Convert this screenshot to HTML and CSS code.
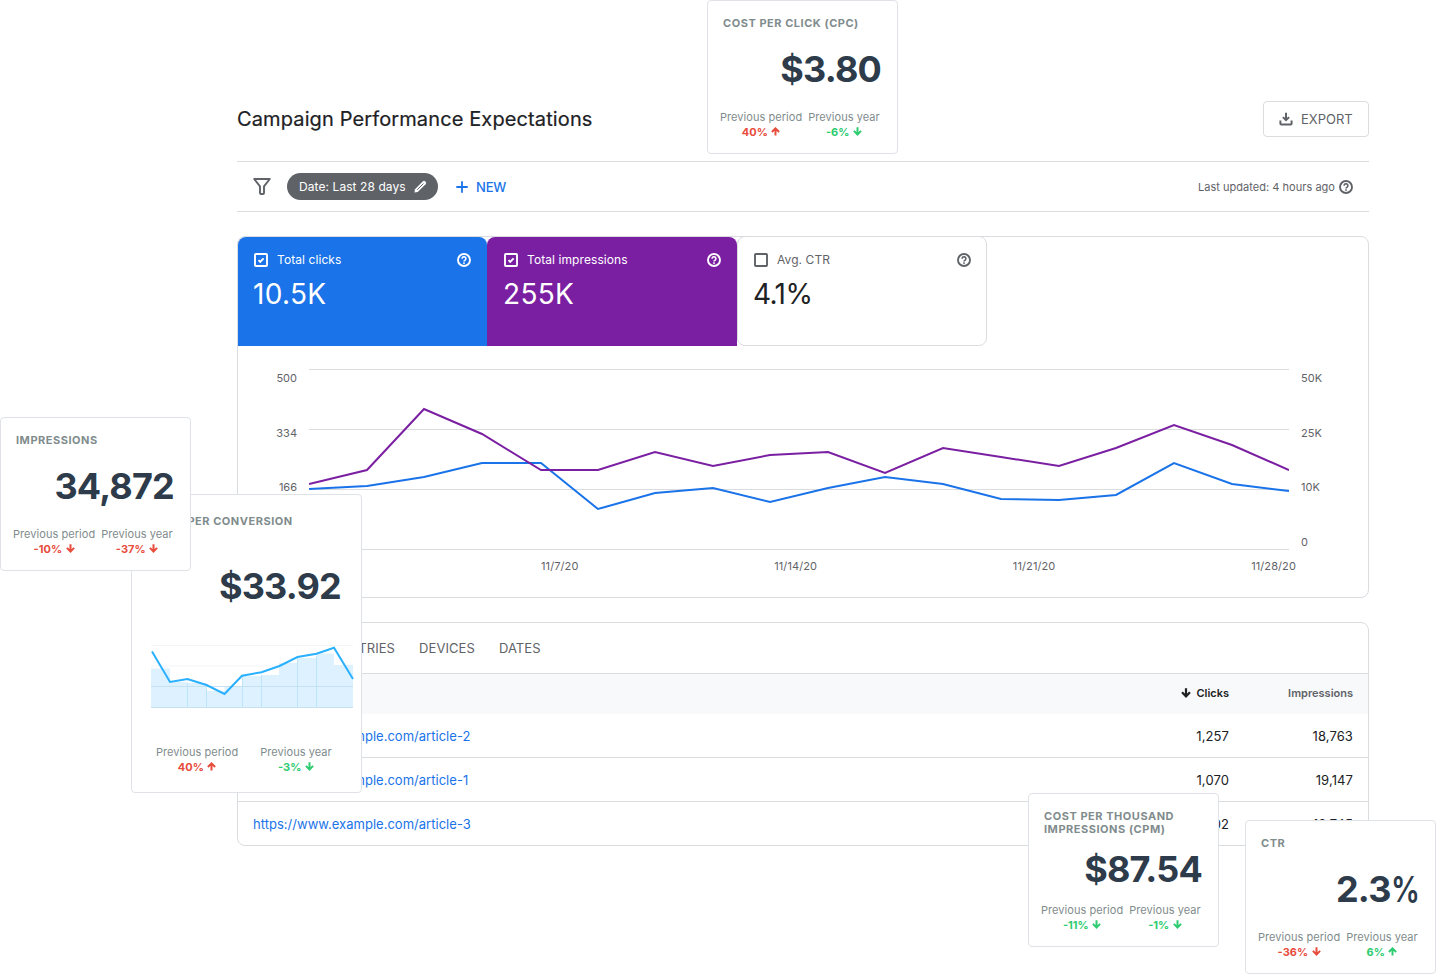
FILE: index.html
```
<!DOCTYPE html>
<html lang="en">
<head>
    <meta charset="UTF-8">
    <meta name="viewport" content="width=device-width, initial-scale=1.0">
    <title>Campaign Performance Expectations</title>
    <link rel="stylesheet" href="styles.css">
</head>
<body>

<!-- Shared icons -->
<svg class="sprite" width="0" height="0">
    <symbol id="icon-help" viewBox="0 0 14 14">
        <circle cx="7" cy="7" r="6" fill="none" stroke="currentColor" stroke-width="1.9"/>
        <path d="M5.1 5.7a1.9 1.9 0 1 1 2.9 1.6c-.7.4-1 .7-1 1.3" fill="none" stroke="currentColor" stroke-width="1.6"/>
        <rect x="6.2" y="9.3" width="1.6" height="1.6" fill="currentColor"/>
    </symbol>
    <symbol id="icon-up" viewBox="0 0 9 9">
        <path d="M4.5 8.6V1.4M.9 5l3.6-3.6L8.1 5" fill="none" stroke="currentColor" stroke-width="2"/>
    </symbol>
    <symbol id="icon-down" viewBox="0 0 9 9">
        <path d="M4.5.2v7.2M.9 3.9l3.6 3.6 3.6-3.6" fill="none" stroke="currentColor" stroke-width="2"/>
    </symbol>
</svg>

<div class="report">
    <div class="header">
        <h1>Campaign Performance Expectations</h1>
        <button class="export">
            <svg width="14" height="14" viewBox="0 0 14 14" fill="none" stroke="currentColor" stroke-width="2">
                <path d="M7 .8v7.4M3.9 5.1 7 8.2l3.1-3.1"/>
                <path d="M1.4 8.4v3.2q0 1 1 1h9.2q1 0 1-1V8.4"/>
            </svg>
            EXPORT
        </button>
    </div>

    <div class="filters">
        <svg class="filter-icon" width="18" height="17" viewBox="0 0 18 17" fill="none" stroke="currentColor" stroke-width="1.9" stroke-linejoin="round">
            <path d="M1.2 1h15.6L11 8.4V15q0 1-1 1H8q-1 0-1-1V8.4z"/>
        </svg>
        <div class="chip">
            Date: Last 28 days
            <svg width="13" height="13" viewBox="0 0 13 13">
                <path d="M.5 12.5 1 9.3 8.7 1.4q1.3-1.2 2.6 0l.3.3q1.2 1.3 0 2.6L3.7 12z" fill="#fff"/>
                <path d="M3.2 9.8 9.4 3.6" stroke="#5f6368" stroke-width="1"/>
            </svg>
        </div>
        <div class="new">
            <svg width="12" height="12" viewBox="0 0 12 12"><path d="M6 .3v11.4M.3 6h11.4" stroke="currentColor" stroke-width="1.8"/></svg>
            NEW
        </div>
        <div class="updated">
            Last updated: 4 hours ago
            <svg class="help"><use href="#icon-help"/></svg>
        </div>
    </div>

    <div class="card chart-card">
        <div class="tiles">
            <div class="tile blue">
                <div class="tile-label">
                    <svg class="check" viewBox="0 0 14 14"><rect x="1" y="1" width="12" height="12" rx=".8"/><path d="M4.5 7.1 6.2 8.8 9.6 5.3"/></svg>
                    Total clicks
                    <svg class="help"><use href="#icon-help"/></svg>
                </div>
                <div class="tile-value">10.5K</div>
            </div>
            <div class="tile purple">
                <div class="tile-label">
                    <svg class="check" viewBox="0 0 14 14"><rect x="1" y="1" width="12" height="12" rx=".8"/><path d="M4.5 7.1 6.2 8.8 9.6 5.3"/></svg>
                    Total impressions
                    <svg class="help"><use href="#icon-help"/></svg>
                </div>
                <div class="tile-value">255K</div>
            </div>
            <div class="tile plain">
                <div class="tile-label">
                    <svg class="check" viewBox="0 0 14 14"><rect x="1" y="1" width="12" height="12" rx=".8"/></svg>
                    Avg. CTR
                    <svg class="help"><use href="#icon-help"/></svg>
                </div>
                <div class="tile-value">4.1%</div>
            </div>
        </div>

        <div class="chart">
            <div class="axis left"><span>500</span><span>334</span><span>166</span><span></span></div>
            <svg class="plot" width="980" height="181" viewBox="0 0 980 181" fill="none">
                <path d="M0 .5H980M0 60.5H980M0 120.5H980M0 180.5H980" stroke="#dadce0"/>
                <polyline stroke="#1a73e8" stroke-width="2" points="0,120 58,117 115,108 173,94 232,94 289,140 346,124 404,119 461,133 519,119 576,108 634,115 692,130 750,131 807,126 865,94 923,115 980,122"/>
                <polyline stroke="#7b1fa2" stroke-width="2" points="0,115 58,101 115,40 173,65 232,101 289,101 346,83 404,97 461,86 519,83 576,104 634,79 692,88 750,97 807,79 865,56 923,76 980,101"/>
            </svg>
            <div class="axis right"><span>50K</span><span>25K</span><span>10K</span><span>0</span></div>
        </div>
        <div class="dates"><span>11/7/20</span><span>11/14/20</span><span>11/21/20</span><span>11/28/20</span></div>
    </div>

    <div class="card table-card">
        <div class="tabs">
            <span>PAGES</span><span>COUNTRIES</span><span>DEVICES</span><span>DATES</span>
        </div>
        <div class="row head">
            <span>Page</span>
            <span class="sorted"><svg class="arrow sort"><use href="#icon-down"/></svg>Clicks</span>
            <span>Impressions</span>
        </div>
        <div class="row"><a>https://www.example.com/article-2</a><span>1,257</span><span>18,763</span></div>
        <div class="row"><a>https://www.example.com/article-1</a><span>1,070</span><span>19,147</span></div>
        <div class="row"><a>https://www.example.com/article-3</a><span>1,002</span><span>18,745</span></div>
    </div>
</div>

<!-- Floating metric cards -->
<div class="metric cpc">
    <div class="metric-title">COST PER CLICK (CPC)</div>
    <div class="metric-value">$3.80</div>
    <div class="compare">
        <div>Previous period<b class="red">40% <svg class="arrow"><use href="#icon-up"/></svg></b></div>
        <div>Previous year<b class="green">-6% <svg class="arrow"><use href="#icon-down"/></svg></b></div>
    </div>
</div>

<div class="metric conversion">
    <div class="metric-title">COST PER CONVERSION</div>
    <div class="metric-value">$33.92</div>
    <svg class="spark" width="203" height="65" viewBox="0 0 203 65" fill="none">
        <path d="M0 1.5H202M0 22H202" stroke="#f3f5f6"/>
        <path d="M0 64V24.5h19V38h17.5v1H55.500v8H73.500V42H91V32h19v-1h18V19h18V14h19V9.5h18V21h19V64z" fill="#def1fe"/>
        <path d="M36.5 39V64M55.5 40V64M91.5 32V64M110.5 31V64M146.5 15V64M165.5 12V64" stroke="#bce5fc"/>
        <path d="M0 42.5H202M0 63.5H202" stroke="#c6e2f2"/>
        <polyline points="1,7.5 19,38 36.5,35 55.5,41 73.5,50 91,31.7 110.5,28.3 128.5,22 146.5,13 165.5,9.7 183,3.8 202,35" stroke="#29b0ff" stroke-width="2"/>
    </svg>
    <div class="compare">
        <div>Previous period<b class="red">40% <svg class="arrow"><use href="#icon-up"/></svg></b></div>
        <div>Previous year<b class="green">-3% <svg class="arrow"><use href="#icon-down"/></svg></b></div>
    </div>
</div>

<div class="metric impressions">
    <div class="metric-title">IMPRESSIONS</div>
    <div class="metric-value">34,872</div>
    <div class="compare">
        <div>Previous period<b class="red">-10% <svg class="arrow"><use href="#icon-down"/></svg></b></div>
        <div>Previous year<b class="red">-37% <svg class="arrow"><use href="#icon-down"/></svg></b></div>
    </div>
</div>

<div class="metric cpm">
    <div class="metric-title">COST PER THOUSAND IMPRESSIONS (CPM)</div>
    <div class="metric-value">$87.54</div>
    <div class="compare">
        <div>Previous period<b class="green">-11% <svg class="arrow"><use href="#icon-down"/></svg></b></div>
        <div>Previous year<b class="green">-1% <svg class="arrow"><use href="#icon-down"/></svg></b></div>
    </div>
</div>

<div class="metric ctr">
    <div class="metric-title">CTR</div>
    <div class="metric-value">2.3<span class="percent">%</span></div>
    <div class="compare">
        <div>Previous period<b class="red">-36% <svg class="arrow"><use href="#icon-down"/></svg></b></div>
        <div>Previous year<b class="green">6% <svg class="arrow"><use href="#icon-up"/></svg></b></div>
    </div>
</div>

</body>
</html>
```
FILE: styles.css
```
* {
    box-sizing: border-box;
}
body {
    font-family: Inter, "Liberation Sans", sans-serif;
    font-size: 13px;
    color: #202124;
    background: #fff;
    margin: 0;
    position: relative;
    height: 974px;
    overflow: hidden;
}
.sprite {
    position: absolute;
}
svg {
    flex: none;
}
.report {
    width: 1132px;
    margin-left: 237px;
    padding-top: 101px;
}

/* Header */
.header {
    display: flex;
    justify-content: space-between;
    height: 60px;
}
h1 {
    font-size: 20px;
    font-weight: 400;
    letter-spacing: 0.12px;
    line-height: 36px;
    margin: 0;
    -webkit-text-stroke: 0.2px;
}
.export {
    display: flex;
    align-items: center;
    gap: 8px;
    width: 106px;
    height: 36px;
    padding: 0 0 0 15px;
    font: 400 13px Inter, sans-serif;
    color: #5f6368;
    background: #fff;
    border: 1px solid #dadce0;
    border-radius: 4px;
}

/* Filters */
.filters {
    display: flex;
    align-items: center;
    height: 51px;
    padding: 0 16px;
    border-top: 1px solid #dadce0;
    border-bottom: 1px solid #dadce0;
    color: #5f6368;
}
.chip {
    display: flex;
    align-items: center;
    justify-content: space-between;
    width: 151px;
    height: 27px;
    margin-left: 16px;
    padding: 0 11px 0 12px;
    border-radius: 14px;
    background: #5f6368;
    color: #fff;
    font-size: 12px;
    letter-spacing: 0.08px;
}
.new {
    display: flex;
    align-items: center;
    gap: 8px;
    margin-left: 18px;
    color: #1a73e8;
    font-weight: 500;
    letter-spacing: -0.2px;
}
.updated {
    display: flex;
    align-items: center;
    gap: 4px;
    margin-left: auto;
    font-size: 11px;
    letter-spacing: 0.03px;
}
.help {
    width: 14px;
    height: 14px;
}

/* Cards */
.card {
    border: 1px solid #dadce0;
    border-radius: 8px;
}
.chart-card {
    height: 362px;
    margin-top: 24px;
}
.tiles {
    display: flex;
    height: 109px;
}
.tile {
    width: 250px;
    padding: 15px 16px;
    border-radius: 8px 8px 0 0;
    color: #fff;
}
.blue {
    width: 249px;
    background: #1a73e8;
}
.purple {
    padding-left: 17px;
    background: #7b1fa2;
}
.plain {
    margin-top: -1px;
    padding: 15px;
    padding-left: 16px;
    border: 1px solid #dadce0;
    border-radius: 8px;
    color: #202124;
}
.tile-label {
    display: flex;
    align-items: center;
    gap: 9px;
    height: 16px;
    font-size: 12px;
    line-height: 14px;
    letter-spacing: 0.08px;
}
.plain .tile-label {
    color: #5f6368;
}
.tile-label .help {
    margin-left: auto;
}
.check {
    width: 14px;
    height: 14px;
    fill: none;
    stroke: currentColor;
    stroke-width: 1.9;
}
.tile-value {
    margin: 9px 0 0 -1px;
    font-size: 28px;
    line-height: 34px;
    letter-spacing: 0.3px;
}
.plain .tile-value {
    letter-spacing: -0.6px;
}

/* Chart */
.chart {
    display: flex;
    gap: 12px;
    margin-top: 23px;
    padding-left: 29px;
}
.axis {
    display: flex;
    flex-direction: column;
    justify-content: space-between;
    height: 178px;
    margin-top: 2px;
    font-size: 11px;
    line-height: 14px;
    color: #5f6368;
}
.axis span {
    height: 14px;
}
.left {
    width: 30px;
    text-align: right;
}
.dates {
    display: flex;
    justify-content: space-between;
    margin: 9px 72px 0 303px;
    font-size: 11px;
    line-height: 14px;
    letter-spacing: 0.1px;
    color: #5f6368;
}

/* Table */
.table-card {
    margin-top: 24px;
}
.tabs {
    display: flex;
    align-items: center;
    gap: 24px;
    height: 51px;
    padding-left: 15px;
    border-bottom: 1px solid #dadce0;
    letter-spacing: 0.08px;
    color: #5f6368;
}
.tabs span:first-child {
    width: 42px;
}
.row {
    display: grid;
    grid-template-columns: 1fr 200px 124px;
    align-items: center;
    height: 44px;
    padding: 0 15px;
    border-bottom: 1px solid #dadce0;
}
.row:last-child {
    height: 43px;
    padding-top: 1px;
    border-bottom: 0;
}
.row span {
    text-align: right;
    letter-spacing: 0.1px;
}
.row a {
    color: #1a73e8;
    letter-spacing: 0.02px;
}
.row.head {
    height: 40px;
    padding-bottom: 3px;
    border: 0;
    background: #f8f9fb;
    color: #5f6368;
    font-size: 11px;
    font-weight: 600;
}
.row.head span {
    letter-spacing: 0;
}
.row .sorted {
    color: #202124;
}
.row.head span:first-child {
    text-align: left;
}

/* Metric cards */
.metric {
    position: absolute;
    display: flex;
    flex-direction: column;
    width: 191px;
    height: 154px;
    padding: 16px 16px 13px 15px;
    background: #fff;
    border: 1px solid #dfe2e6;
    border-radius: 4px;
}
.cpc {
    left: 707px;
    top: 0;
}
.conversion {
    left: 131px;
    top: 494px;
    width: 231px;
    height: 299px;
    padding: 20px 20px 17px 19px;
}
.impressions {
    left: 0;
    top: 417px;
}
.cpm {
    left: 1028px;
    top: 793px;
}
.ctr {
    left: 1245px;
    top: 820px;
}
.metric-title {
    margin-right: -10px;
    font-size: 11px;
    font-weight: 700;
    line-height: 13px;
    letter-spacing: 0.53px;
    color: #7f8c8d;
}
.metric-value {
    display: flex;
    flex: 1;
    align-items: center;
    justify-content: flex-end;
    margin-top: -2px;
    font-size: 36px;
    font-weight: 700;
    letter-spacing: -0.8px;
    color: #2d3b4a;
}
.conversion .metric-value {
    margin-top: 0;
}
/* narrower percent sign */
.percent {
    margin-left: -7px;
    font-weight: 600;
    transform: scaleX(0.8);
    transform-origin: right;
}
.spark {
    display: block;
    margin-bottom: 36px;
}
.compare {
    display: flex;
    gap: 6px;
    margin: 0 -8px 0 -3px;
    font-size: 11px;
    line-height: 15px;
    letter-spacing: 0.05px;
    color: #7f8c8d;
    text-align: center;
    white-space: nowrap;
}
.conversion .compare {
    gap: 22px;
    margin-left: 5px;
}
.compare b {
    display: block;
    font-weight: 700;
    letter-spacing: 0;
}
.red {
    color: #e74c3c;
}
.green {
    color: #2ecc71;
}
.arrow {
    width: 9px;
    height: 9px;
    margin-left: 1px;
}
.arrow.sort {
    width: 10px;
    height: 10px;
    margin: 0 5px -1px 0;
}
```
